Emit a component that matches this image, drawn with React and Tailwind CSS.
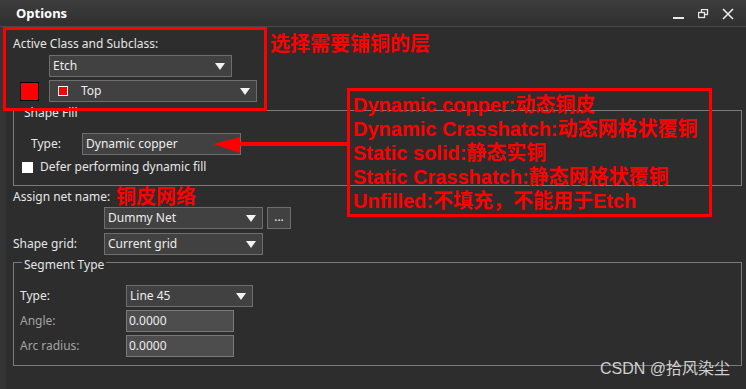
import React from "react";

const Tri = () => (
  <svg width="10" height="7" viewBox="0 0 10 7" className="shrink-0">
    <polygon points="0,0 10,0 5,7" fill="#f2f2f2" />
  </svg>
);

function Select({ className, children }) {
  return (
    <div
      className={`h-[22px] flex items-center justify-between border border-[#6e6e6e] bg-[#414141] pl-[3px] pr-[6px] text-[#ededed] ${className}`}
    >
      <div className="flex items-center">{children}</div>
      <Tri />
    </div>
  );
}

function Input({ value }) {
  return (
    <div className="h-[22px] w-[108px] flex items-center border border-[#7a7a7a] bg-[#4d4d4d] pl-[2px] text-[#ededed]">
      {value}
    </div>
  );
}

export default function App() {
  return (
    <div className="relative w-[746px] h-[389px] overflow-hidden bg-[#2d2d2d] font-['Noto_Sans','Open_Sans',sans-serif] text-[12px] leading-[16px] text-[#e6e6e6]">
      {/* Title bar */}
      <div className="h-[27px] flex items-center justify-between border-b border-[#484848] bg-gradient-to-b from-[#3d3d3d] to-[#303030]">
        <div className="pl-[16px] text-[13px] font-bold text-white">Options</div>
        <div className="flex items-center gap-[13px] pr-[12px] pt-[2px]">
          <svg width="12" height="12" viewBox="0 0 12 12">
            <rect x="0" y="9" width="11" height="2" fill="#e8e8e8" />
          </svg>
          <svg width="11" height="11" viewBox="0 0 11 11">
            <rect x="3.5" y="0.5" width="6" height="5" fill="none" stroke="#e8e8e8" strokeWidth="1.3" />
            <rect x="0.5" y="3.5" width="6" height="5" fill="#333" stroke="#e8e8e8" strokeWidth="1.3" />
          </svg>
          <svg width="12" height="12" viewBox="0 0 12 12">
            <path d="M1 1 L11 11 M11 1 L1 11" stroke="#e8e8e8" strokeWidth="1.6" />
          </svg>
        </div>
      </div>

      {/* Body */}
      <div className="flex h-[362px]">
        <div className="w-[6px] shrink-0 bg-[#343434]" />
        <div className="flex-1 flex flex-col pl-[7px] pr-[4px]">
          <div className="mt-[9px]">Active Class and Subclass:</div>
          <Select className="mt-[3px] ml-[36px] w-[183px]">Etch</Select>
          <div className="mt-[3px] flex items-center">
            <div className="ml-[7px] w-[19px] h-[19px] border border-black bg-[#ff0000]" />
            <Select className="ml-[10px] w-[208px]">
              <div className="ml-[5px] w-[10px] h-[10px] border border-white bg-[#ff0000]" />
              <span className="ml-[13px]">Top</span>
            </Select>
          </div>

          {/* Shape Fill */}
          <div className="mt-[8px] flex flex-col border border-[#7a7a7a] pb-[10px]">
            <div className="-mt-[6px] ml-[8px] w-fit bg-[#2d2d2d] px-[2px]">Shape Fill</div>
            <div className="mt-[12px] flex items-center pl-[17px]">
              <div className="w-[51px]">Type:</div>
              <Select className="w-[159px]">Dynamic copper</Select>
            </div>
            <div className="mt-[4px] flex items-center pl-[8px]">
              <div className="w-[11px] h-[11px] bg-white" />
              <div className="ml-[7px]">Defer performing dynamic fill</div>
            </div>
          </div>

          <div className="mt-[3px]">Assign net name:</div>
          <div className="mt-[2px] ml-[91px] flex items-center">
            <Select className="w-[159px]">Dummy Net</Select>
            <div className="ml-[4px] h-[22px] w-[24px] flex items-center justify-center border border-[#6e6e6e] bg-[#414141] pb-[3px] text-[#ededed]">
              ...
            </div>
          </div>
          <div className="mt-[4px] flex items-center">
            <div className="w-[91px]">Shape grid:</div>
            <Select className="w-[159px]">Current grid</Select>
          </div>

          {/* Segment Type */}
          <div className="mt-[7px] flex flex-col border border-[#7a7a7a] pb-[8px]">
            <div className="-mt-[6px] ml-[8px] w-fit bg-[#2d2d2d] px-[2px]">Segment Type</div>
            <div className="mt-[12px] flex items-center pl-[6px]">
              <div className="w-[106px]">Type:</div>
              <Select className="w-[127px]">Line 45</Select>
            </div>
            <div className="mt-[3px] flex items-center pl-[6px]">
              <div className="w-[106px] text-[#a3a3a3]">Angle:</div>
              <Input value="0.0000" />
            </div>
            <div className="mt-[3px] flex items-center pl-[6px]">
              <div className="w-[106px] text-[#a3a3a3]">Arc radius:</div>
              <Input value="0.0000" />
            </div>
          </div>
        </div>
      </div>

      {/* Annotations */}
      <div className="absolute left-[3px] top-[27px] w-[264px] h-[84px] border-[3px] border-[#ff0000]" />
      <div className="absolute left-[270px] top-[31px] font-['Noto_Sans_CJK_SC',sans-serif] text-[20px] leading-[24px] font-bold text-[#ff0000]">
        选择需要铺铜的层
      </div>
      <div className="absolute left-[116px] top-[186px] font-['Noto_Sans_CJK_SC',sans-serif] text-[20px] leading-[20px] font-bold text-[#ff0000]">
        铜皮网络
      </div>
      <div className="absolute left-[347px] top-[88px] w-[365px] h-[129px] border-[3px] border-[#ff0000] pl-[3px] pt-[2px] font-['Liberation_Sans','Noto_Sans_CJK_SC',sans-serif] text-[20px] leading-[24px] font-bold text-[#ff0000] whitespace-nowrap">
        <div>Dynamic copper:动态铜皮</div>
        <div>Dynamic Crasshatch:动态网格状覆铜</div>
        <div>Static solid:静态实铜</div>
        <div>Static Crasshatch:静态网格状覆铜</div>
        <div>Unfilled:不填充，不能用于Etch</div>
      </div>
      <svg className="absolute left-[210px] top-[134px]" width="140" height="22" viewBox="0 0 140 22">
        <polygon points="3,10 30,3 30,19" fill="#ff0000" />
        <rect x="28" y="8" width="110" height="4" fill="#ff0000" />
      </svg>
      <div className="absolute right-[16px] top-[359px] font-['Liberation_Sans','Noto_Sans_CJK_SC',sans-serif] text-[16px] leading-[20px] text-[#cfcfcf]">
        CSDN @拾风染尘
      </div>
    </div>
  );
}
